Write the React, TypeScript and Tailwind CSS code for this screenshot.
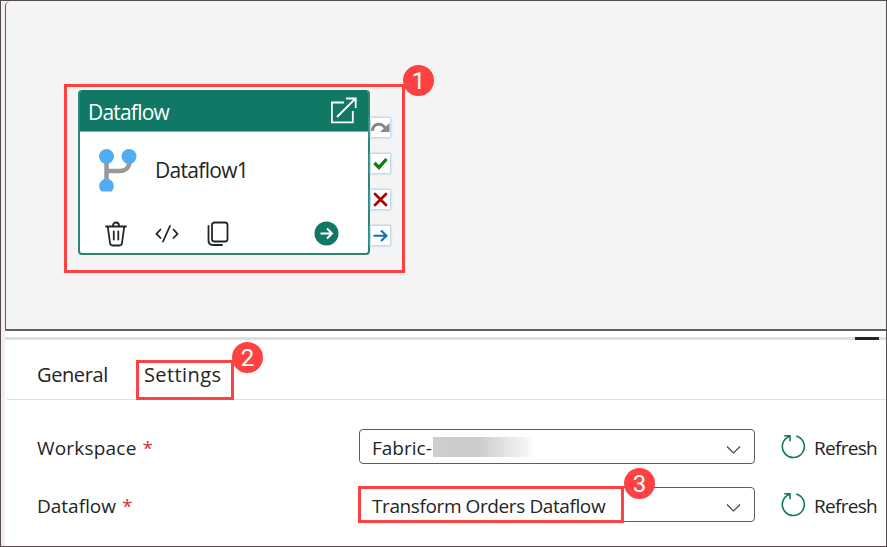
import React from "react";

function Badge({ n, className }: { n: number; className: string }) {
  return (
    <div
      className={`absolute flex h-[31px] w-[31px] items-center justify-center rounded-full bg-[#ff4141] font-['Roboto',sans-serif] text-[24px] leading-none text-white ${className}`}
    >
      {n}
    </div>
  );
}

function Frame({ className }: { className: string }) {
  return <div className={`absolute border-3 border-[#ff4141] ${className}`} />;
}

function Port({ children }: { children: React.ReactNode }) {
  return (
    <div className="h-[19px] w-[19px] bg-white shadow-[0_0_2px_1px_#a9cdf0]">
      <svg width="19" height="19" viewBox="0 0 19 19" fill="none">{children}</svg>
    </div>
  );
}

function ActivityCard() {
  return (
    <div className="absolute top-[89px] left-[77px] flex items-start">
      <div className="h-[165px] w-[292px] overflow-hidden rounded-[4px] border-2 border-t-0 border-[#2b8673] bg-white">
        <div className="flex h-[42px] items-center justify-between border-b border-[#78b0a4] bg-[#117865] pr-[11px] pl-[8px]">
          <span className="mt-[4px] text-[21px] leading-none tracking-[-0.8px] text-white">Dataflow</span>
          <svg className="-mt-px" width="27" height="27" viewBox="0 0 27 27" fill="none" stroke="#fff" strokeWidth="1.8">
            <path d="M14 5.5H1.9V25.3H22.8V14M7 20L25 2M16 1.5H25.7V11" />
          </svg>
        </div>
        <div className="flex h-[75px] items-center pl-[18px]">
          <svg width="39" height="44" viewBox="0 0 39 44" fill="none">
            <path d="M8.5 8V36M31.5 8V13C31.5 19 28 23 22 23H8.5" stroke="#999" strokeWidth="4.5" />
            <circle cx="8.5" cy="8.5" r="7.5" fill="#50adf1" />
            <circle cx="31" cy="8.5" r="7.5" fill="#50adf1" />
            <path d="M3.5 43.5A7.4 7.4 0 1 1 13.5 43.5Z" fill="#50adf1" />
          </svg>
          <span className="mt-[2px] ml-[18px] text-[21px] leading-none tracking-[-0.7px] text-[#242424]">Dataflow1</span>
        </div>
        <div className="flex h-[47px] items-center pl-[24px] text-[#242424]">
          <svg className="mt-[6px]" width="24" height="26" viewBox="0 0 24 26" fill="none" stroke="currentColor" strokeWidth="1.8" strokeLinecap="round" strokeLinejoin="round">
            <path d="M2 5.5H22M9 5V4.5A3 3 0 0 1 15 4.5V5M3.8 6L6 22Q6.3 24.5 8.5 24.5H15.5Q17.7 24.5 18 22L20.2 6M9.8 10.5V18.5M14.3 10.5V18.5" />
          </svg>
          <svg className="mt-[6px] ml-[27px]" width="24" height="20" viewBox="0 0 24 20" fill="none" stroke="currentColor" strokeWidth="1.8" strokeLinecap="round" strokeLinejoin="round">
            <path d="M5.5 5.5L1.5 9.8L5.5 14M18.5 5.5L22.5 9.8L18.5 14M15 2L8 17.5" />
          </svg>
          <svg className="mt-[6px] ml-[28px]" width="22" height="25" viewBox="0 0 22 25" fill="none" stroke="currentColor" strokeWidth="1.8" strokeLinecap="round">
            <rect x="5" y="1.5" width="15.5" height="19" rx="2.5" />
            <path d="M1.5 5V19.5Q1.5 24 6 24H15" />
          </svg>
          <svg className="mt-[6px] ml-[85px]" width="25" height="25" viewBox="0 0 25 25" fill="none">
            <circle cx="12.5" cy="12.5" r="12" fill="#117865" />
            <path d="M6.5 12.5H18M13 7.5L18 12.5L13 17.5" stroke="#fff" strokeWidth="2" />
          </svg>
        </div>
      </div>
      <div className="mt-[28px] ml-px flex flex-col gap-[17px]">
        <Port>
          <path d="M1.5 13C2 4.5 11 4 15 11" stroke="#8a8886" strokeWidth="3" />
          <path d="M9 14H18.5V5Z" fill="#8a8886" />
        </Port>
        <Port><path d="M3.5 9L8 13.5L15.5 5" stroke="#107c10" strokeWidth="3.3" /></Port>
        <Port><path d="M4 4L15 15M15 4L4 15" stroke="#a80000" strokeWidth="2.8" strokeLinecap="round" /></Port>
        <Port><path d="M2.5 9.8H15.5M10 4.5L15.5 9.8L10 15" stroke="#106ebe" strokeWidth="2.1" /></Port>
      </div>
    </div>
  );
}

function Field({ label, labelClass, children }: { label: string; labelClass: string; children: React.ReactNode }) {
  return (
    <div className="flex h-[35px] items-center pl-[32px]">
      <div className="flex w-[322px] shrink-0 pt-[3px] text-[19px] leading-none text-[#242424]">
        <span className={labelClass}>{label}</span>
        <span className="ml-[6px] text-[#d13438]">*</span>
      </div>
      <div className="flex h-[35px] w-[396px] shrink-0 items-center justify-between rounded-[4px] border border-[#605e5c] pr-[13px] pl-[12px] text-[19px] leading-none text-[#242424]">
        {children}
        <svg className="mt-[6px]" width="15" height="10" viewBox="0 0 15 10" fill="none" stroke="#424242" strokeWidth="1.1">
          <path d="M1 1.5L7.5 8L14 1.5" />
        </svg>
      </div>
      <svg className="ml-[26px] shrink-0" width="25" height="25" viewBox="0 0 25 25" fill="none" stroke="#117865" strokeWidth="1.6">
        <path d="M15.2 1.9A11 11 0 1 1 8 2.4M3.3 1.8H9V7.2" />
      </svg>
      <span className="ml-[8px] pt-[4px] text-[19px] leading-none tracking-[-0.7px] text-[#242424]">Refresh</span>
    </div>
  );
}

export default function App() {
  return (
    <div className="relative flex h-[547px] w-[887px] overflow-hidden border border-[#534b50] bg-white font-['Open_Sans','Noto_Sans',sans-serif]">
      <div className="w-[4px] shrink-0 bg-[#f3eff0]" />
      <main className="flex min-w-0 flex-1 flex-col whitespace-nowrap">
        <section className="h-[330px] shrink-0 rounded-tl-[5px] border-b-2 border-l border-[#605e60] bg-[#f4f4f4]" />
        <div className="mt-[6px] flex h-[3px] shrink-0 justify-end bg-[#dfdfdf] pr-[7px]">
          <div className="w-[24px] bg-[#242424]" />
        </div>
        <nav className="ml-[2px] flex h-[60px] shrink-0 border-b border-[#e0e0e0] pt-[23px] pl-[30px] text-[20px] leading-[24px] text-[#242424]">
          <span className="w-[107px] tracking-[-0.4px]">General</span>
          <span className="font-medium tracking-[0.4px]">Settings</span>
        </nav>
        <div className="mt-[29px] flex flex-col gap-[23px]">
          <Field label="Workspace" labelClass="tracking-[0.2px]">
            <span className="flex items-center">
              <span className="pt-[3px] tracking-[0px]">Fabric-</span>
              <span className="ml-px h-[20px] w-[99px] bg-linear-to-r from-[#cecece] via-[#cbcbcb] via-45% to-[#fafafa]" />
            </span>
          </Field>
          <Field label="Dataflow" labelClass="tracking-[0px]">
            <span className="pt-[4px] tracking-[-0.4px]">Transform Orders Dataflow</span>
          </Field>
        </div>
      </main>
      <ActivityCard />
      <Frame className="top-[83px] left-[63px] h-[189px] w-[341px]" />
      <Badge n={1} className="top-[64px] left-[402px]" />
      <Frame className="top-[359px] left-[135px] h-[40px] w-[98px]" />
      <Badge n={2} className="top-[341px] left-[231px]" />
      <Frame className="top-[485px] left-[357px] h-[37px] w-[266px]" />
      <Badge n={3} className="top-[467px] left-[623px]" />
    </div>
  );
}
